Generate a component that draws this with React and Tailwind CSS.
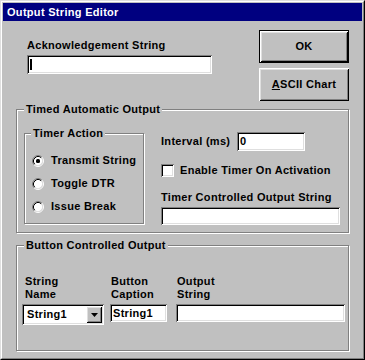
import React from 'react';

const sunken =
  'bg-white shadow-[inset_1px_1px_0_#808080,inset_-1px_-1px_0_#ffffff,inset_2px_2px_0_#000000,inset_-2px_-2px_0_#dfdfdf]';
const raised =
  'bg-[#c0c0c0] shadow-[inset_1px_1px_0_#ffffff,inset_-1px_-1px_0_#000000,inset_2px_2px_0_#dfdfdf,inset_-2px_-2px_0_#808080]';
const etched = 'border border-[#808080] shadow-[inset_1px_1px_0_#ffffff,1px_1px_0_#ffffff]';

function Legend({ children, left = 7 }) {
  return (
    <span
      className={`absolute top-[-7px] px-[2px] bg-[#c0c0c0] leading-[13px] whitespace-nowrap ${
        left === 6 ? 'left-[6px]' : 'left-[7px]'
      }`}
    >
      {children}
    </span>
  );
}

function Radio({ checked, label }) {
  return (
    <div className="flex items-center h-[23px] gap-[7px]">
      <svg width="12" height="12" viewBox="0 0 12 12">
        <circle cx="6" cy="6" r="4.5" fill="#ffffff" />
        <path d="M2.11 9.89 A5.5 5.5 0 0 1 9.89 2.11" stroke="#808080" strokeWidth="1" fill="none" />
        <path d="M9.89 2.11 A5.5 5.5 0 0 1 2.11 9.89" stroke="#ffffff" strokeWidth="1" fill="none" />
        <path d="M2.82 9.18 A4.5 4.5 0 0 1 9.18 2.82" stroke="#000000" strokeWidth="1" fill="none" />
        <path d="M9.18 2.82 A4.5 4.5 0 0 1 2.82 9.18" stroke="#dfdfdf" strokeWidth="1" fill="none" />
        {checked && <rect x="4" y="4" width="4" height="4" rx="1.5" fill="#000000" />}
      </svg>
      <span className="leading-[13px]">{label}</span>
    </div>
  );
}

export default function App() {
  return (
    <div className="w-[365px] h-[360px] bg-[#c0c0c0] border border-t-[#dfdfdf] border-l-[#dfdfdf] border-r-black border-b-black text-[11px] tracking-[0.3px] font-bold text-black font-['Liberation_Sans',Arial,sans-serif]">
      <div className="h-full flex flex-col p-px border border-t-white border-l-white border-r-[#808080] border-b-[#808080]">
        {/* Title bar */}
        <div className="h-[18px] shrink-0 bg-[#000080] text-white flex items-center pl-[4px] leading-[14px]">
          Output String Editor
        </div>

        {/* Top row */}
        <div className="h-[88px] shrink-0 flex">
          <div className="ml-[24px] pt-[18px] w-[185px]">
            <div className="leading-[13px]">Acknowledgement String</div>
            <div className={`mt-[3px] h-[19px] w-[185px] flex items-center ${sunken}`}>
              <div className="ml-[3px] w-[2px] h-[11px] bg-black" />
            </div>
          </div>
          <div className="ml-[47px] pt-[9px] w-[90px] flex flex-col">
            <div className="h-[33px] border border-black">
              <div className={`h-full flex items-center justify-center ${raised}`}>OK</div>
            </div>
            <div className={`mt-[5px] h-[33px] flex items-center justify-center ${raised}`}>
              <span>
                <span className="underline">A</span>SCII Chart
              </span>
            </div>
          </div>
        </div>

        {/* Timed Automatic Output */}
        <div className={`relative ml-[13px] w-[333px] h-[124px] shrink-0 ${etched}`}>
          <Legend>Timed Automatic Output</Legend>
          <div className="flex pl-[7px] pt-[23px]">
            <div className={`relative w-[120px] h-[91px] ${etched}`}>
              <Legend left={6}>Timer Action</Legend>
              <div className="pl-[7px] pt-[15px] flex flex-col">
                <Radio checked label="Transmit String" />
                <Radio label="Toggle DTR" />
                <Radio label="Issue Break" />
              </div>
            </div>
            <div className="ml-[17px] mt-[-1px] flex flex-col">
              <div className="flex items-center h-[19px]">
                <span className="w-[76px] leading-[13px]">Interval (ms)</span>
                <div className={`w-[68px] h-[19px] flex items-center pl-[3px] ${sunken}`}>0</div>
              </div>
              <div className="mt-[13px] flex items-center h-[13px] gap-[6px]">
                <div className={`w-[13px] h-[13px] ${sunken}`} />
                <span className="leading-[13px]">Enable Timer On Activation</span>
              </div>
              <div className="mt-[14px] leading-[13px]">Timer Controlled Output String</div>
              <div className={`mt-[3px] w-[179px] h-[18px] ${sunken}`} />
            </div>
          </div>
        </div>

        {/* Button Controlled Output */}
        <div className={`relative mt-[12px] ml-[13px] w-[333px] h-[106px] shrink-0 ${etched}`}>
          <Legend>Button Controlled Output</Legend>
          <div className="flex pl-[5px] pt-[29px]">
            <div className="w-[82px] flex flex-col">
              <div className="ml-[3px] leading-[13px]">
                String
                <br />
                Name
              </div>
              <div className={`mt-[3px] h-[21px] flex items-stretch p-[2px] ${sunken}`}>
                <div className="flex-1 flex items-center pl-[3px]">String1</div>
                <div className={`w-[16px] flex items-center justify-center ${raised}`}>
                  <svg width="7" height="4" viewBox="0 0 7 4">
                    <path d="M0 0 H7 L3.5 4 Z" fill="#000000" />
                  </svg>
                </div>
              </div>
            </div>
            <div className="ml-[6px] w-[57px] flex flex-col">
              <div className="ml-[1px] leading-[13px]">
                Button
                <br />
                Caption
              </div>
              <div className={`mt-[3px] h-[18px] flex items-center pl-[3px] ${sunken}`}>String1</div>
            </div>
            <div className="ml-[9px] w-[169px] flex flex-col">
              <div className="ml-[1px] leading-[13px]">
                Output
                <br />
                String
              </div>
              <div className={`mt-[3px] h-[18px] ${sunken}`} />
            </div>
          </div>
        </div>
      </div>
    </div>
  );
}
